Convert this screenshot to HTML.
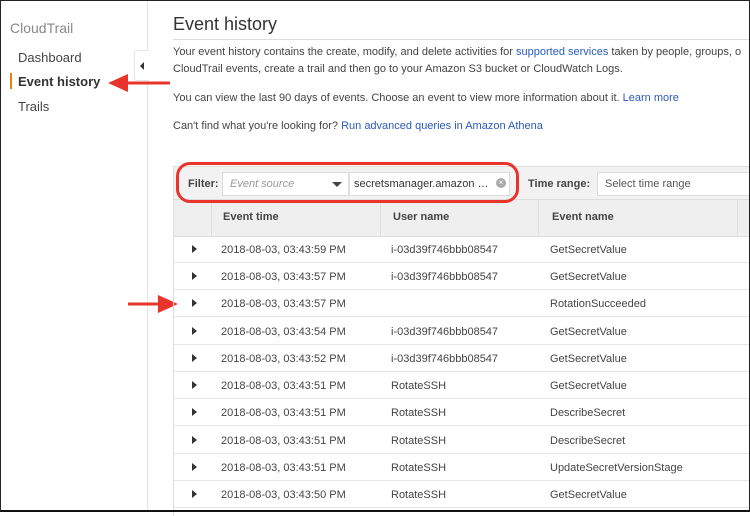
<!DOCTYPE html>
<html><head><style>
*{margin:0;padding:0;box-sizing:border-box}
body{width:750px;height:512px;overflow:hidden;background:#fff;font-family:"Liberation Sans",sans-serif;position:relative;color:#444}
.frame{position:absolute;left:0;top:0;width:750px;height:512px;border:1px solid #222;border-bottom:2px solid #111;z-index:10;pointer-events:none}
.side{position:absolute;left:0;top:0;width:148px;height:512px;border-right:1px solid #e4e4e4}
.a{position:absolute;white-space:nowrap}
.lnk{color:#2a5bb8}
.tbl{position:absolute;left:173px;top:166px;width:590px;height:350px;border-left:1px solid #ddd;border-top:1px solid #ddd}
.filter{position:absolute;left:0;top:0;width:100%;height:33px;background:#f2f2f2;border-bottom:1px solid #ddd}
.hdr{position:absolute;left:0;top:33px;width:100%;height:37px;background:#efefef;border-bottom:1px solid #ddd}
.row{position:absolute;left:0;width:100%;height:27px;border-bottom:1px solid #e4e4e4;font-size:11px;color:#444}
.row span{position:absolute;top:8px}
.tri{position:absolute;left:19px;top:9px;width:0;height:0;border-left:5px solid #333;border-top:4px solid transparent;border-bottom:4px solid transparent}
</style></head><body>
<div class="side">
<div class="a" style="left:10px;top:20px;font-size:14px;color:#888">CloudTrail</div>
<div class="a" style="left:18px;top:50px;font-size:13px;color:#444">Dashboard</div>
<div style="position:absolute;left:10px;top:73px;width:2px;height:16px;background:#e8820c"></div>
<div class="a" style="left:18px;top:74px;font-size:13px;font-weight:bold;color:#333">Event history</div>
<div class="a" style="left:18px;top:99px;font-size:13px;color:#444">Trails</div>
</div>
<div style="position:absolute;left:134px;top:50px;width:15px;height:31px;background:#fff;border:1px solid #e4e4e4;border-right:none;border-radius:3px 0 0 3px"></div>
<div style="position:absolute;left:140px;top:62px;border-right:4px solid #333;border-top:4px solid transparent;border-bottom:4px solid transparent"></div>
<svg style="position:absolute;left:108px;top:73px" width="62" height="20"><line x1="14" y1="10" x2="62" y2="10" stroke="#e8342a" stroke-width="3"/><polygon points="0,10 20,1 20,19" fill="#e8342a"/></svg>
<svg style="position:absolute;left:128px;top:294px" width="50" height="20"><line x1="0" y1="10" x2="36" y2="10" stroke="#e8342a" stroke-width="3"/><polygon points="50,10 30,1 30,19" fill="#e8342a"/></svg>

<div class="a" style="left:173px;top:14px;font-size:18px;color:#333">Event history</div>
<div style="position:absolute;left:173px;top:39px;width:577px;height:1px;background:#ddd"></div>
<div class="a" style="left:173px;top:46px;font-size:11px;color:#444">Your event history contains the create, modify, and delete activities for <span class="lnk">supported services</span> taken by people, groups, o</div>
<div class="a" style="left:173px;top:63px;font-size:11px;color:#444">CloudTrail events, create a trail and then go to your Amazon S3 bucket or CloudWatch Logs.</div>
<div class="a" style="left:173px;top:92px;font-size:11px;color:#444">You can view the last 90 days of events. Choose an event to view more information about it. <span class="lnk">Learn more</span></div>
<div class="a" style="left:173px;top:120px;font-size:11px;color:#444">Can't find what you're looking for? <span class="lnk">Run advanced queries in Amazon Athena</span></div>

<div class="tbl">
<div class="filter">
<div class="a" style="left:14px;top:11px;font-size:11px;font-weight:bold;color:#444">Filter:</div>
<div style="position:absolute;left:48px;top:5px;width:127px;height:24px;background:#fff;border:1px solid #ddd"></div>
<div class="a" style="left:56px;top:11px;font-size:11px;font-style:italic;color:#999">Event source</div>
<div style="position:absolute;left:158px;top:15px;border-top:5px solid #444;border-left:5px solid transparent;border-right:5px solid transparent"></div>
<div style="position:absolute;left:175px;top:5px;width:161px;height:24px;background:#fff;border:1px solid #ddd"></div>
<div class="a" style="left:180px;top:11px;font-size:11px;color:#333">secretsmanager.amazon …</div>
<div style="position:absolute;left:322px;top:11px;width:10px;height:10px;border-radius:50%;background:#aaa;color:#fff;font-size:8px;line-height:10px;text-align:center">×</div>
<div class="a" style="left:354px;top:11px;font-size:11px;font-weight:bold;color:#444">Time range:</div>
<div style="position:absolute;left:423px;top:5px;width:170px;height:24px;background:#fff;border:1px solid #ddd"></div>
<div class="a" style="left:431px;top:11px;font-size:11px;color:#555">Select time range</div>
</div>
<div class="hdr">
<div style="position:absolute;left:37px;top:0;width:1px;height:37px;background:#ddd"></div>
<div style="position:absolute;left:206px;top:0;width:1px;height:37px;background:#ddd"></div>
<div style="position:absolute;left:364px;top:0;width:1px;height:37px;background:#ddd"></div>
<div style="position:absolute;left:563px;top:0;width:1px;height:37px;background:#ddd"></div>
<div class="a" style="left:49px;top:11px;font-size:11px;font-weight:bold;color:#444">Event time</div>
<div class="a" style="left:219px;top:11px;font-size:11px;font-weight:bold;color:#444">User name</div>
<div class="a" style="left:378px;top:11px;font-size:11px;font-weight:bold;color:#444">Event name</div>
</div>
<div class="row" style="top:70px;height:55px;border:none"></div>
</div>
<div style="position:absolute;left:173px;top:236px;width:577px">
<div class="row" style="top:0"><div class="tri"></div><span style="left:48px">2018-08-03, 03:43:59 PM</span><span style="left:218px">i-03d39f746bbb08547</span><span style="left:377px">GetSecretValue</span></div>
<div class="row" style="top:27px"><div class="tri"></div><span style="left:48px">2018-08-03, 03:43:57 PM</span><span style="left:218px">i-03d39f746bbb08547</span><span style="left:377px">GetSecretValue</span></div>
<div class="row" style="top:54px"><div class="tri"></div><span style="left:48px">2018-08-03, 03:43:57 PM</span><span style="left:377px">RotationSucceeded</span></div>
<div class="row" style="top:82px"><div class="tri"></div><span style="left:48px">2018-08-03, 03:43:54 PM</span><span style="left:218px">i-03d39f746bbb08547</span><span style="left:377px">GetSecretValue</span></div>
<div class="row" style="top:109px"><div class="tri"></div><span style="left:48px">2018-08-03, 03:43:52 PM</span><span style="left:218px">i-03d39f746bbb08547</span><span style="left:377px">GetSecretValue</span></div>
<div class="row" style="top:136px"><div class="tri"></div><span style="left:48px">2018-08-03, 03:43:51 PM</span><span style="left:218px">RotateSSH</span><span style="left:377px">GetSecretValue</span></div>
<div class="row" style="top:163px"><div class="tri"></div><span style="left:48px">2018-08-03, 03:43:51 PM</span><span style="left:218px">RotateSSH</span><span style="left:377px">DescribeSecret</span></div>
<div class="row" style="top:191px"><div class="tri"></div><span style="left:48px">2018-08-03, 03:43:51 PM</span><span style="left:218px">RotateSSH</span><span style="left:377px">DescribeSecret</span></div>
<div class="row" style="top:218px"><div class="tri"></div><span style="left:48px">2018-08-03, 03:43:51 PM</span><span style="left:218px">RotateSSH</span><span style="left:377px">UpdateSecretVersionStage</span></div>
<div class="row" style="top:245px"><div class="tri"></div><span style="left:48px">2018-08-03, 03:43:50 PM</span><span style="left:218px">RotateSSH</span><span style="left:377px">GetSecretValue</span></div>
</div>
<div style="position:absolute;left:173px;top:166px;width:1px;height:346px;background:#ddd"></div>
<div style="position:absolute;left:176px;top:162px;width:343px;height:41px;border:3px solid #e8342a;border-radius:14px"></div>
<div class="frame"></div>
</body></html>
